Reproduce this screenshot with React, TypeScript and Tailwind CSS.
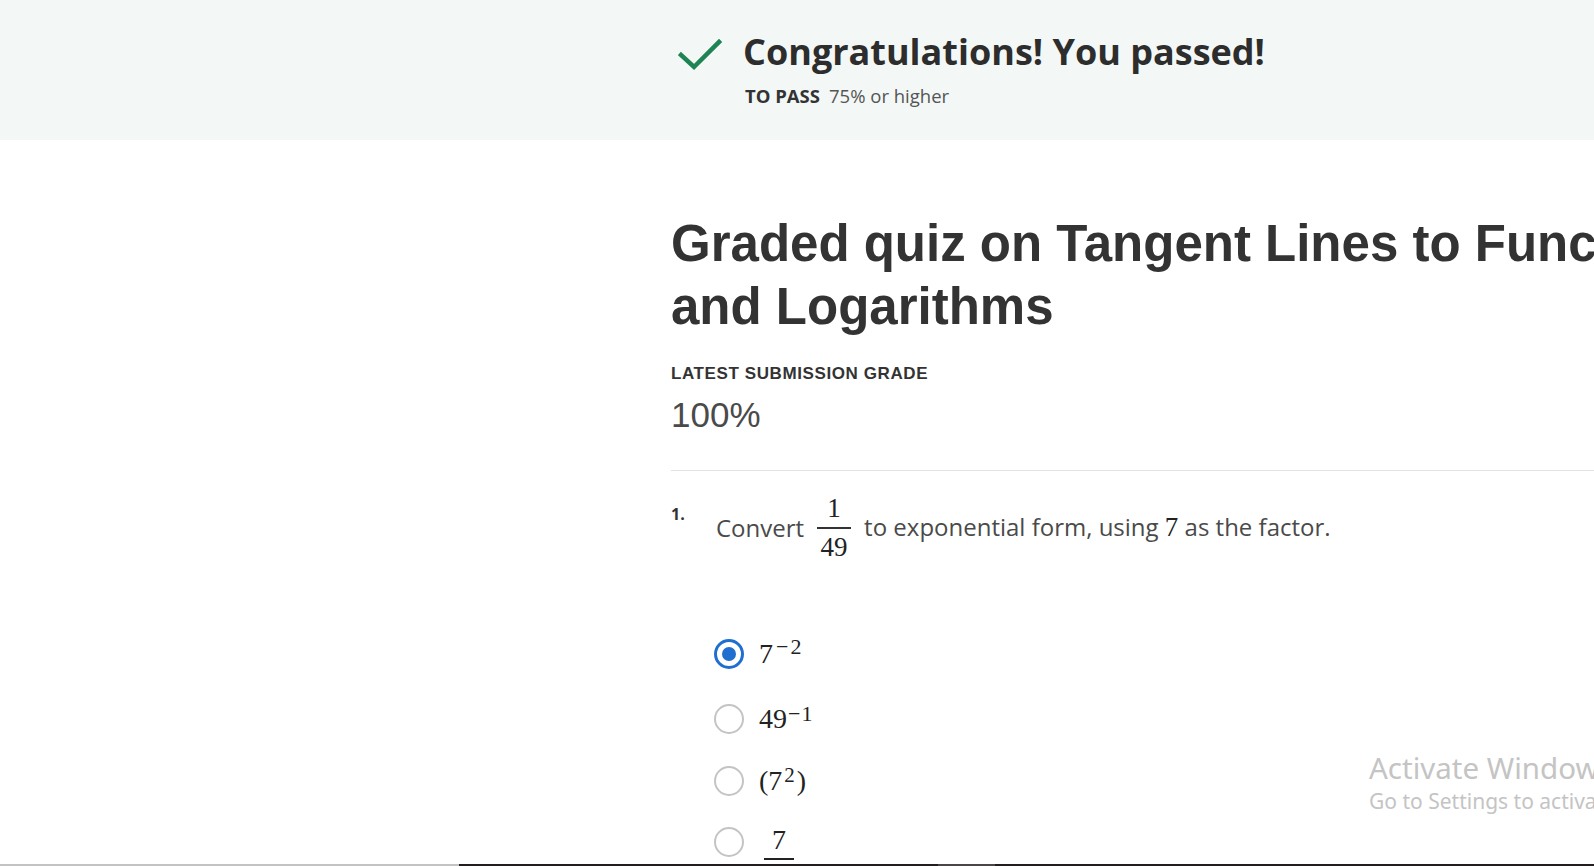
import React from 'react';

const serif = { fontFamily: '"Liberation Serif", "DejaVu Serif", serif' };

function Radio({ checked }: { checked?: boolean }) {
  return checked ? (
    <span className="w-[30px] h-[30px] rounded-full border-[3px] border-[#1f6fd0] flex items-center justify-center shrink-0">
      <span className="w-[14px] h-[14px] rounded-full bg-[#1f6fd0]" />
    </span>
  ) : (
    <span className="w-[30px] h-[30px] rounded-full border-2 border-[#c4c4c4] shrink-0" />
  );
}

function Option({ checked, children, h }: { checked?: boolean; children: React.ReactNode; h: string }) {
  return (
    <div className={`flex items-center gap-[15px] ${h}`}>
      <Radio checked={checked} />
      <div className="text-[28px] text-[#222]" style={serif}>
        {children}
      </div>
    </div>
  );
}

export default function App() {
  return (
    <div className="relative w-full h-[866px] overflow-hidden bg-white flex flex-col font-['Open_Sans',sans-serif]">
      <div className="flex-1 overflow-hidden">
        {/* pass banner */}
        <div className="h-[140px] bg-[#f3f8f6] flex items-start pl-[678px] pt-[29px]">
          <svg width="44" height="34" viewBox="0 0 44 34" className="mt-[8px] shrink-0">
            <polyline points="3,18 16,30 41,5" fill="none" stroke="#1f8354" strokeWidth="4.5" strokeLinecap="square" />
          </svg>
          <div className="ml-[21px]">
            <div className="text-[36px] font-bold text-[#2d2d2d] leading-[46px] whitespace-nowrap">Congratulations! You passed!</div>
            <div className="mt-[9px] ml-[2px] text-[18.5px] text-[#555] whitespace-nowrap leading-[24px]">
              <span className="font-bold text-[#333] mr-[9px]">TO PASS</span>
              75% or higher
            </div>
          </div>
        </div>

        {/* quiz body */}
        <div className="ml-[671px] pt-[72px]">
          <h1 className="font-['Liberation_Sans',Arial,sans-serif] font-bold text-[51px] leading-[63px] text-[#333] whitespace-nowrap">
            <div>Graded quiz on Tangent Lines to Functions</div>
            <div>and Logarithms</div>
          </h1>
          <div className="mt-[23px] font-['Liberation_Sans',Arial,sans-serif] font-bold text-[17px] tracking-[0.6px] text-[#333]">
            LATEST SUBMISSION GRADE
          </div>
          <div className="mt-[6px] font-['Liberation_Sans',Arial,sans-serif] text-[35px] leading-[44px] text-[#4a4a4a]">100%</div>
          <div className="mt-[33px] h-px bg-[#e2e2e2]" />

          {/* question */}
          <div className="flex items-start pt-[27px]">
            <div className="w-[45px] text-[16px] font-bold text-[#333] pt-[4px]">1.</div>
            <div className="flex items-center text-[24px] text-[#4a4a4a] whitespace-nowrap -mt-[8px]">
              <span>Convert</span>
              <span className="inline-flex flex-col items-center mx-[13px] text-[27px] leading-[37px] text-[#222]" style={serif}>
                <span>1</span>
                <span className="w-[34px] h-[2px] bg-[#333]" />
                <span>49</span>
              </span>
              <span>to exponential form, using <span className="text-[27px] text-[#222]" style={serif}>7</span> as the factor.</span>
            </div>
          </div>

          <div className="ml-[43px] mt-[56px] flex flex-col">
            <Option checked h="h-[65px]">
              7<sup className="text-[22px] relative -top-[9px] ml-[3px] tracking-[2px]">−2</sup>
            </Option>
            <Option h="h-[64px]">
              49<sup className="text-[22px] relative -top-[7px] ml-[1px] tracking-[1px]">−1</sup>
            </Option>
            <Option h="h-[60px]">
              (7<sup className="text-[21px] relative -top-[8px] mx-[2px]">2</sup>)
            </Option>
            <Option h="h-[62px]">
              <span className="inline-flex flex-col items-center leading-[36px] mt-[34px] ml-[5px]">
                <span>7</span>
                <span className="w-[30px] h-[2px] bg-[#222]" />
                <span>2</span>
              </span>
            </Option>
          </div>
        </div>
      </div>

      {/* windows watermark */}
      <div className="absolute left-[1369px] top-[749px] whitespace-nowrap text-[#c4c4c4] font-['Noto_Sans',sans-serif]">
        <div className="text-[29.5px] leading-[38px]">Activate Windows</div>
        <div className="text-[21px] leading-[28px]">Go to Settings to activate Windows.</div>
      </div>

      {/* taskbar edge */}
      <div className="h-[2px] flex shrink-0">
        <div className="w-[459px] bg-[#c3c3c3]" />
        <div className="w-[479px] bg-[#221e1f]" />
        <div className="w-[57px] bg-[#4a4546]" />
        <div className="flex-1 bg-[#221e1f]" />
      </div>
    </div>
  );
}
